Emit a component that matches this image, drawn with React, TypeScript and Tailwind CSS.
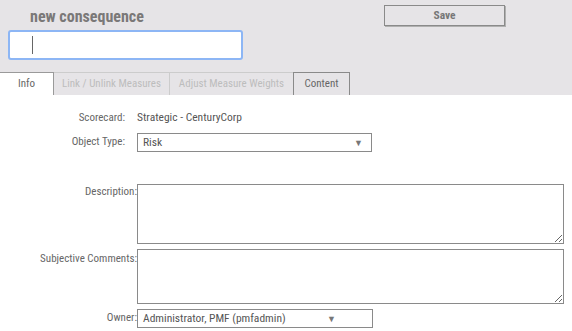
import React from "react";

const font = { fontFamily: '"Roboto Condensed", "Liberation Sans Narrow", Roboto, sans-serif' };

function FakeSelect({ value, width, arrowRight }: { value: string; width: string; arrowRight: string }) {
  return (
    <div className={`relative h-[19px] ${width} border border-[#8a8a8a] bg-white flex items-center pl-[5px] text-[11.5px] text-[#555]`}>
      <span>{value}</span>
      <span className={`absolute ${arrowRight} top-[3px] text-[9px] text-[#777]`}>▼</span>
    </div>
  );
}

export default function App() {
  return (
    <div className="w-[572px] h-[331px] bg-white overflow-hidden text-[#666]" style={font}>
      <div className="bg-[#e6e4e7] h-[72px] flex">
        <div className="flex flex-col">
          <div className="pl-[30px] pt-[7px] h-[30px] text-[16px] font-bold text-[#7a7878] leading-[20px]">new consequence</div>
          <div className="ml-[8px] w-[235px] h-[30px] border-2 border-[#8db6f5] rounded-[3px] bg-white relative">
            <div className="absolute left-[22px] top-[4px] w-px h-[18px] bg-[#666]"></div>
          </div>
        </div>
        <div className="ml-[141px] mt-[5px] w-[121px] h-[21px] border border-[#8a8a8a] shadow-[1px_1px_0_#b0b0b0] flex items-center justify-center text-[11.5px] font-bold text-[#777]">
          Save
        </div>
      </div>
      <div className="bg-[#e6e4e7] h-[23px] flex text-[11px]">
        <div className="w-[54px] h-[23px] bg-white border-t border-r border-[#9a9a9a] flex items-center justify-center text-[#666]">Info</div>
        <div className="w-[116px] h-[23px] border-t border-r border-[#cccccc] flex items-center justify-center text-[#bdbdbd]">Link / Unlink Measures</div>
        <div className="w-[123px] h-[23px] border-t border-[#cccccc] flex items-center justify-center text-[#bdbdbd]">Adjust Measure Weights</div>
        <div className="w-[57px] h-[23px] border-t border-l border-r border-[#8a8a8a] flex items-center justify-center text-[#666]">Content</div>
      </div>
      <div className="flex flex-col text-[11px]">
        <div className="flex mt-[16px] h-[14px] items-center">
          <div className="w-[125px] text-right">Scorecard:</div>
          <div className="ml-[12px] text-[#555] text-[11.5px]">Strategic - CenturyCorp</div>
        </div>
        <div className="flex mt-[8px] items-center">
          <div className="w-[125px] text-right">Object Type:</div>
          <div className="ml-[12px]">
            <FakeSelect value="Risk" width="w-[235px]" arrowRight="right-[8px]" />
          </div>
        </div>
        <div className="flex mt-[32px]">
          <div className="w-[137px] text-right">Description:</div>
          <textarea className="w-[427px] h-[60px] border border-[#8a8a8a] bg-white outline-none"></textarea>
        </div>
        <div className="flex mt-[5px]">
          <div className="w-[137px] text-right pt-[2px]">Subjective Comments:</div>
          <textarea className="w-[427px] h-[55px] border border-[#8a8a8a] bg-white outline-none"></textarea>
        </div>
        <div className="flex mt-[5px] items-center">
          <div className="w-[137px] text-right">Owner:</div>
          <FakeSelect value="Administrator, PMF (pmfadmin)" width="w-[236px]" arrowRight="right-[36px]" />
        </div>
      </div>
    </div>
  );
}
